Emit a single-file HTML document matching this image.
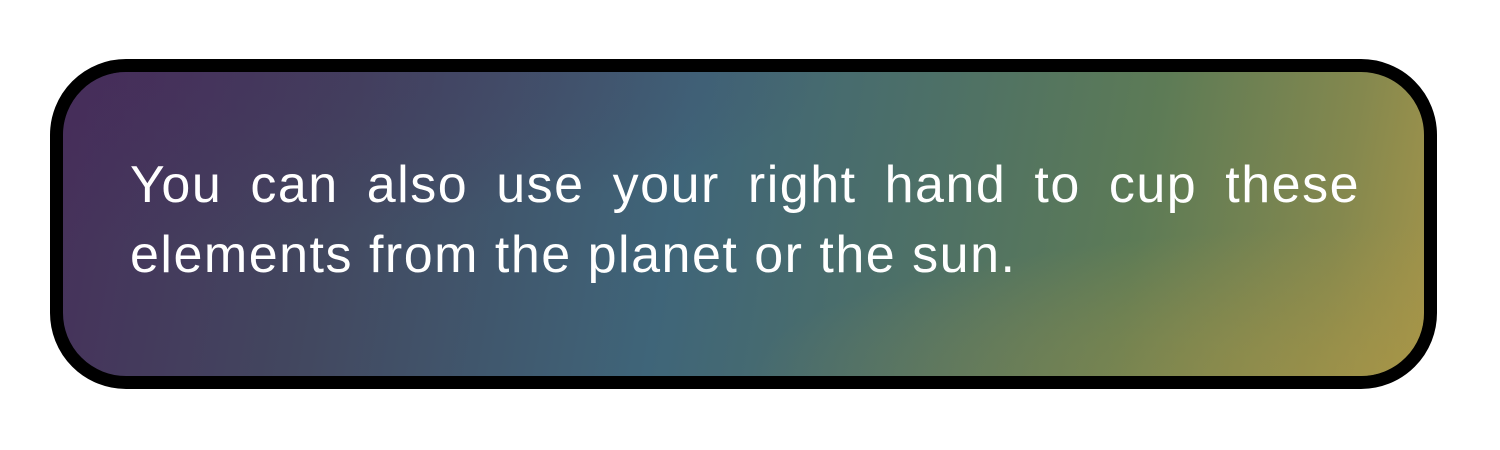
<!DOCTYPE html>
<html><head><style>
html,body{margin:0;padding:0;background:#fff;width:1500px;height:450px;overflow:hidden}
.box{position:absolute;left:50px;top:59px;width:1361px;height:304px;border:13px solid #000;border-radius:76px;
background:linear-gradient(100deg,#46305a 0%,#42475f 20%,#3f6579 45%,#4d7067 62%,#5d7b56 78%,#84884e 92%,#a3944a 100%);overflow:hidden}
.ov{position:absolute;inset:0;background:radial-gradient(ellipse at 0% 0%,rgba(70,40,90,.5),rgba(70,40,90,0) 40%),radial-gradient(ellipse at 100% 100%,rgba(170,150,70,.6),rgba(170,150,70,0) 35%)}
.t{position:absolute;left:67px;top:78px;width:1230px;color:#fff;font-family:"Liberation Sans",sans-serif;font-size:52px;letter-spacing:1.5px;line-height:70px}
.l1{text-align:justify;text-align-last:justify}
</style></head><body>
<div class="box"><div class="ov"></div>
<div class="t"><div class="l1">You can also use your right hand to cup these</div><div>elements from the planet or the sun.</div></div>
</div>
</body></html>
